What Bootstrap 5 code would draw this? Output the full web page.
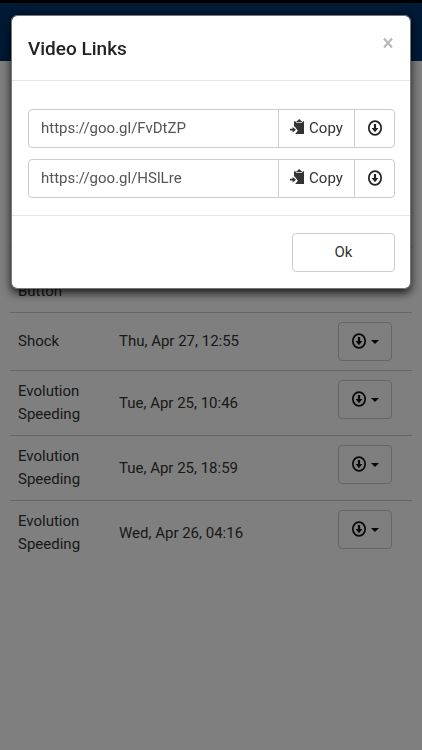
<!DOCTYPE html>
<html lang="en">
<head>
<meta charset="utf-8">
<meta name="viewport" content="width=device-width, initial-scale=1">
<title>Video Links</title>
<link href="https://cdn.jsdelivr.net/npm/bootstrap@5.3.0/dist/css/bootstrap.min.css" rel="stylesheet">
<style>
body { font-family: Roboto, "Liberation Sans", sans-serif; font-size: 15px; line-height: 23px; color: #333; background: #fff; }
.status-strip { height: 3px; background: #000; }
.site-bar { height: 58px; background: #00326a; }
.page-body { padding: 81px 10px 0; }
.page-title { font-size: 18px; line-height: 23px; margin-bottom: 41px; }
.event-table { --bs-table-color: #333; --bs-table-bg: transparent; border-color: #ccc; }
.event-table > tbody > tr > td { padding: 9px 8px; vertical-align: middle; }
.event-table > tbody > tr > td:last-child { vertical-align: top; }
.event-table > tbody > tr:last-child > td { border-bottom: 0; }
.col-kind { width: 101px; }
.col-action { width: 82px; }
.btn-plain { --bs-btn-font-size: 15px; --bs-btn-line-height: 23px; --bs-btn-color: #333; --bs-btn-bg: #fff; --bs-btn-border-color: #ccc; --bs-btn-padding-x: 12px; --bs-btn-padding-y: 7px; --bs-btn-border-radius: 4px; --bs-btn-hover-bg: #eee; --bs-btn-hover-border-color: #bbb; height: 39px; }
.menu-btn { width: 54px; padding: 0 0 3px; color: #111; }
.menu-btn::after { margin-left: 4px; border-top-width: 4px; border-right-width: 4px; border-left-width: 4px; vertical-align: 1px; }
.modal-backdrop { --bs-backdrop-opacity: .5; }
.link-dialog { margin: 15px 11px 0 11px; max-width: none; }
.link-dialog .modal-content { border: 1px solid #777; border-radius: 6px; box-shadow: 0 4px 10px rgba(0,0,0,.8); color: #333; }
.link-dialog .modal-header { padding: 21px 16px 20px; border-color: #e5e5e5; }
.link-dialog .modal-title { font-size: 19px; line-height: 23px; color: #222; }
.link-dialog .modal-body { padding: 28px 15px 17px 16px; gap: 11px; }
.link-dialog .modal-footer { padding: 17px 15px 16px; border-color: #e5e5e5; }
.link-dialog .modal-footer > * { margin: 0; }
.close-btn { border: 0; background: none; padding: 0; color: #b8b8b8; line-height: 0; }
.link-field { font-size: 15px; line-height: 23px; color: #555; border-color: #ccc; padding: 7px 12px; border-radius: 4px; }
.copy-btn { width: 77px; }
.get-btn { width: 41px; padding: 0 0 3px; color: #222; }
.ok-btn { width: 103px; }
</style>
<script src="https://cdn.jsdelivr.net/npm/bootstrap@5.3.0/dist/js/bootstrap.bundle.min.js"></script>
</head>
<body>
<svg class="d-none" aria-hidden="true">
  <symbol id="icon-down" viewBox="0 0 16 16">
    <ellipse cx="8" cy="8" rx="6.200" ry="6.900" fill="none" stroke="currentColor" stroke-width="1.700"/>
    <path d="M6.900 4h2.200v4h2.300L8 12.200 4.600 8h2.300z" fill="currentColor"/>
  </symbol>
  <symbol id="icon-copy" viewBox="0 0 15 16">
    <path d="M4 2.200h1.200L6.600 4h5.200l1.300-1.800H14V15H5.200l2.600-3.200L4.800 7.600H4z" fill="currentColor"/>
    <path d="M6.200 3.200C6.200 2 7.600 2 8 1.200 8.300 0 10.200 0 10.500 1.200 10.900 2 12.200 2 12.200 3.200z" fill="currentColor"/>
    <path d="M0 9.800h2.600V8L6 10.700l-3.400 2.700v-1.800H0z" fill="currentColor"/>
  </symbol>
</svg>

<div class="status-strip"></div>
<nav class="navbar site-bar p-0" aria-label="Main"></nav>
<main class="page-body">
  <h1 class="page-title">Events</h1>
  <table class="table event-table mb-0">
    <colgroup><col class="col-kind"><col><col class="col-action"></colgroup>
    <tbody>
      <tr><td>Evolution</td><td></td><td></td></tr>
      <tr><td>Panic<br>Button</td><td></td><td></td></tr>
      <tr><td>Shock</td><td>Thu, Apr 27, 12:55</td><td><button type="button" class="btn btn-plain menu-btn dropdown-toggle" aria-label="Download"><svg width="16" height="16"><use href="#icon-down"/></svg></button></td></tr>
      <tr><td>Evolution Speeding</td><td>Tue, Apr 25, 10:46</td><td><button type="button" class="btn btn-plain menu-btn dropdown-toggle" aria-label="Download"><svg width="16" height="16"><use href="#icon-down"/></svg></button></td></tr>
      <tr><td>Evolution Speeding</td><td>Tue, Apr 25, 18:59</td><td><button type="button" class="btn btn-plain menu-btn dropdown-toggle" aria-label="Download"><svg width="16" height="16"><use href="#icon-down"/></svg></button></td></tr>
      <tr><td>Evolution Speeding</td><td>Wed, Apr 26, 04:16</td><td><button type="button" class="btn btn-plain menu-btn dropdown-toggle" aria-label="Download"><svg width="16" height="16"><use href="#icon-down"/></svg></button></td></tr>
    </tbody>
  </table>
</main>

<div class="modal-backdrop show"></div>
<div class="modal d-block" role="dialog" aria-modal="true" aria-labelledby="dialog-title">
  <div class="modal-dialog link-dialog">
    <div class="modal-content">
      <div class="modal-header align-items-start">
        <h2 class="modal-title" id="dialog-title">Video Links</h2>
        <button type="button" class="close-btn" aria-label="Close"><svg width="12" height="12" viewBox="0 0 12 12"><path d="M2 1.500l8 9M10 1.500l-8 9" stroke="currentColor" stroke-width="2.200"/></svg></button>
      </div>
      <div class="modal-body d-grid">
        <div class="input-group">
          <input type="text" class="form-control link-field" value="https://goo.gl/FvDtZP" aria-label="First video link" readonly>
          <button type="button" class="btn btn-plain copy-btn px-0"><svg width="15" height="16" class="me-1 mb-1"><use href="#icon-copy"/></svg>Copy</button>
          <button type="button" class="btn btn-plain get-btn" aria-label="Download"><svg width="16" height="16"><use href="#icon-down"/></svg></button>
        </div>
        <div class="input-group">
          <input type="text" class="form-control link-field" value="https://goo.gl/HSlLre" aria-label="Second video link" readonly>
          <button type="button" class="btn btn-plain copy-btn px-0"><svg width="15" height="16" class="me-1 mb-1"><use href="#icon-copy"/></svg>Copy</button>
          <button type="button" class="btn btn-plain get-btn" aria-label="Download"><svg width="16" height="16"><use href="#icon-down"/></svg></button>
        </div>
      </div>
      <div class="modal-footer">
        <button type="button" class="btn btn-plain ok-btn">Ok</button>
      </div>
    </div>
  </div>
</div>
</body>
</html>
